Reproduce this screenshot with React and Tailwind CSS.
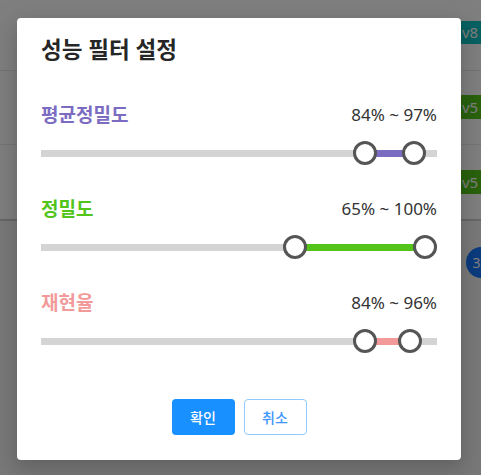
import React from "react";

const FONT = { fontFamily: '"Noto Sans", "Noto Sans CJK KR", sans-serif' };

function RangeSlider({ from, to, color }) {
  // handle centres are inset by 12px on each side of the 396px track
  const usable = 372;
  const a = 12 + (from / 100) * usable;
  const b = 12 + (to / 100) * usable;
  return (
    <div className="relative h-[24px] w-full">
      <div className="absolute left-0 right-0 top-[9px] h-[7px] bg-[#d4d4d4]" />
      <div
        className="absolute top-[9px] h-[7px]"
        style={{ left: a, width: b - a, backgroundColor: color }}
      />
      <div
        className="absolute top-0 h-[24px] w-[24px] rounded-full border-[3px] border-[#555555] bg-white"
        style={{ left: a - 12 }}
      />
      <div
        className="absolute top-0 h-[24px] w-[24px] rounded-full border-[3px] border-[#555555] bg-white"
        style={{ left: b - 12 }}
      />
    </div>
  );
}

function Section({ label, color, range, from, to }) {
  return (
    <div className="flex flex-col gap-[14px]">
      <div className="flex h-[24px] items-center justify-between">
        <span className="text-[19px] font-semibold leading-[24px]" style={{ color }}>
          {label}
        </span>
        <span className="text-[17px] leading-[24px] text-[#333333]">{range}</span>
      </div>
      <RangeSlider from={from} to={to} color={color} />
    </div>
  );
}

export default function App() {
  return (
    <div className="relative h-[475px] w-[481px] overflow-hidden bg-white" style={FONT}>
      {/* page behind */}
      <div className="flex flex-col">
        <div className="flex h-[71px] items-start justify-end border-b border-[#e8e8e8] pt-[21px]">
          <span className="flex h-[23px] w-[30px] items-center bg-[#13c2c2] pl-[11px] text-[15px] text-white">v8</span>
        </div>
        <div className="flex h-[74px] items-start justify-end border-b border-[#e8e8e8] pt-[24px]">
          <span className="flex h-[24px] w-[30px] items-center bg-[#52c41a] pl-[11px] text-[15px] text-white">v5</span>
        </div>
        <div className="flex h-[76px] items-start justify-end border-b-2 border-[#cfcfcf] pt-[25px]">
          <span className="flex h-[24px] w-[30px] items-center bg-[#52c41a] pl-[11px] text-[15px] text-white">v5</span>
        </div>
        <div className="flex h-[254px] items-start justify-end bg-[#f2f2f2] pt-[26px]">
          <span className="mr-[-16px] flex h-[31px] w-[31px] items-center justify-center rounded-full bg-[#1677ff] pr-[10px] text-[14px] text-white">
            3
          </span>
        </div>
      </div>

      {/* overlay */}
      <div className="absolute inset-0 bg-black/50" />

      {/* modal */}
      <div className="absolute left-[17px] top-[18px] flex w-[444px] flex-col rounded-[4px] bg-white px-[24px] pt-[18px] pb-[25px] shadow-[0_6px_16px_rgba(0,0,0,0.12),0_9px_28px_8px_rgba(0,0,0,0.08)]">
        <h2 className="text-[22.5px] font-semibold leading-[28px] text-[#262626]">성능 필터 설정</h2>
        <div className="mt-[39px] flex flex-col gap-[32px]">
          <Section label="평균정밀도" color="#7b6cc2" range="84% ~ 97%" from={84} to={97} />
          <Section label="정밀도" color="#52c41a" range="65% ~ 100%" from={65} to={100} />
          <Section label="재현율" color="#f29a9a" range="84% ~ 96%" from={84} to={96} />
        </div>
        <div className="mt-[46px] flex justify-center gap-[9px]">
          <button className="h-[36px] w-[63px] rounded-[4px] bg-[#1890ff] text-[14px] font-medium text-white">확인</button>
          <button className="h-[36px] w-[63px] rounded-[4px] border border-[#91caff] bg-white text-[14px] font-medium text-[#4096ff]">
            취소
          </button>
        </div>
      </div>
    </div>
  );
}
